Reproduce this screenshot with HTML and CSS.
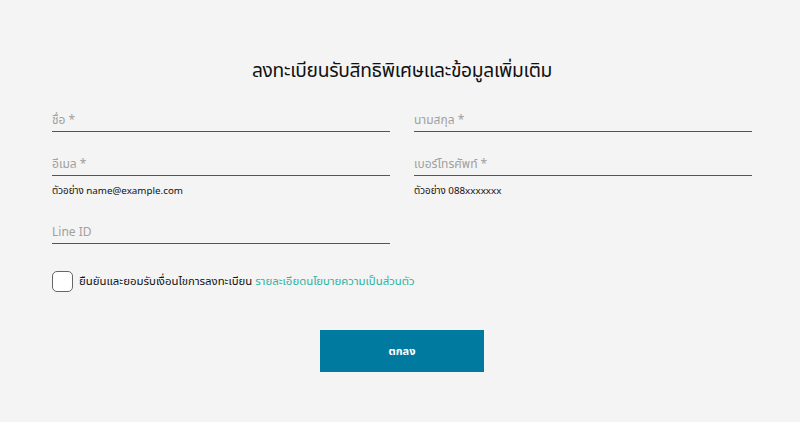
FILE: index.html
```html
<!DOCTYPE html>
<html lang="th">
<head>
    <meta charset="UTF-8">
    <meta name="viewport" content="width=device-width, initial-scale=1.0">
    <title>ลงทะเบียนรับสิทธิพิเศษ</title>
    <link rel="stylesheet" href="styles.css">
</head>
<body>
    <div class="page">
        <!-- Titre -->
        <h1 class="title">ลงทะเบียนรับสิทธิพิเศษและข้อมูลเพิ่มเติม</h1>

        <form class="form">
            <div class="row">
                <div class="field">
                    <div class="input">ชื่อ *</div>
                </div>
                <div class="field">
                    <div class="input">นามสกุล *</div>
                </div>
            </div>

            <div class="row row-help">
                <div class="field">
                    <div class="input">อีเมล *</div>
                    <p class="help">ตัวอย่าง name@example.com</p>
                </div>
                <div class="field">
                    <div class="input">เบอร์โทรศัพท์ *</div>
                    <p class="help">ตัวอย่าง 088xxxxxxx</p>
                </div>
            </div>

            <div class="row row-last">
                <div class="field">
                    <div class="input">Line ID</div>
                </div>
            </div>

            <!-- Consentement -->
            <label class="consent">
                <span class="box"></span>
                <span>ยืนยันและยอมรับเงื่อนไขการลงทะเบียน <a href="#" class="link">รายละเอียดนโยบายความเป็นส่วนตัว</a></span>
            </label>

            <div class="btn-container">
                <button type="button" class="btn">ตกลง</button>
            </div>
        </form>
    </div>
</body>
</html>
```

FILE: styles.css
```css
/* Fond et police */
body {
    margin: 0;
    background-color: #f4f4f4;
    font-family: 'Noto Sans Thai', 'Noto Sans', 'DejaVu Sans', sans-serif;
    color: #111;
}

.page {
    padding: 58px 48px 0 52px;
}

/* Titre */
.title {
    margin: 0;
    text-align: center;
    font-size: 19.2px;
    line-height: 28px;
    font-weight: 400;
    letter-spacing: -0.3px;
    color: #111;
}

.form {
    margin-top: 24px;
}

/* Lignes du formulaire */
.row {
    display: grid;
    grid-template-columns: 338px 338px;
    column-gap: 24px;
}

.row-help {
    margin-top: 22px;
}

.row-last {
    margin-top: 23px;
}

.input {
    font-size: 12px;
    line-height: 20px;
    color: #a0a0a0;
    padding-bottom: 1px;
    border-bottom: 1px solid #555;
}

.help {
    margin: 7px 0 0;
    font-size: 9.8px;
    line-height: 16px;
    color: #111;
}

/* Case à cocher */
.consent {
    display: flex;
    align-items: center;
    gap: 6px;
    margin-top: 27px;
    font-size: 11.4px;
    color: #111;
}

.box {
    width: 19px;
    height: 19px;
    border: 1.5px solid #666;
    border-radius: 5px;
    background-color: #fff;
}

.link {
    color: #2bb3a3;
    text-decoration: none;
}

/* Bouton */
.btn-container {
    display: flex;
    justify-content: center;
    margin-top: 38px;
}

.btn {
    width: 164px;
    height: 42px;
    border: none;
    background-color: #007b9f;
    color: #fff;
    font-family: inherit;
    font-size: 11px;
    font-weight: 700;
    cursor: pointer;
}
```
